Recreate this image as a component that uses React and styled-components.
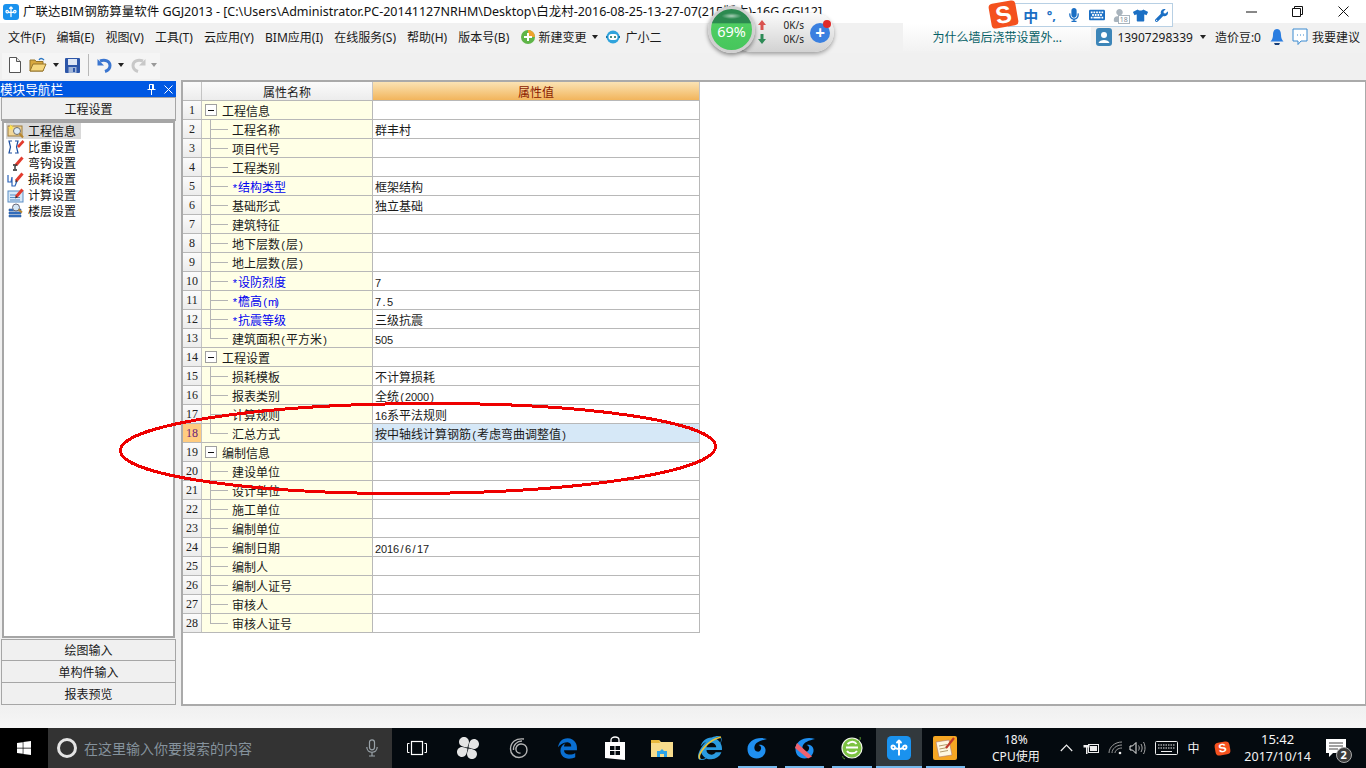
import React from "react";
import styled, { createGlobalStyle } from "styled-components";
import { FaMicrophone, FaKeyboard, FaTshirt, FaWrench, FaUser, FaWindows, FaEdgeLegacy, FaInternetExplorer } from "react-icons/fa";

const CJK = `"Noto Sans", "Noto Sans CJK SC", sans-serif`;

const Global = createGlobalStyle`
  html, body { margin: 0; padding: 0; height: 768px; overflow: hidden; background: #f0f0f0; }
  * { box-sizing: border-box; }
  #root { font-family: ${CJK}; font-size: 12px; color: #111; }
`;

const Page = styled.div`
  position: relative;
  width: 1366px;
  height: 768px;
  display: flex;
  flex-direction: column;
  overflow: hidden;
`;

/* ---------- title bar ---------- */
const TitleBar = styled.div`
  height: 23px;
  background: #fff;
  display: flex;
  align-items: center;
  padding-left: 3px;
  flex-shrink: 0;
`;
const TitleText = styled.div`
  margin-left: 4px;
  font-size: 12.5px;
  white-space: nowrap;
  flex: 1;
  overflow: hidden;
  color: #111;
  line-height: 23px;
`;
const WinControls = styled.div`
  display: flex;
  align-items: center;
  height: 23px;
`;
const WinBtn = styled.div`
  width: 46px;
  height: 20px;
  display: flex;
  align-items: center;
  justify-content: center;
`;

/* ---------- menu bar ---------- */
const MenuBar = styled.div`
  height: 30px;
  flex-shrink: 0;
  background: #f1f1f1;
  display: flex;
  align-items: center;
  padding: 0 0 2px 8px;
`;
const MenuItem = styled.div`
  margin-right: ${(p) => p.$mr ?? 11.1}px;
  white-space: nowrap;
  color: #1a1a1a;
  display: flex;
  align-items: center;
`;
const Label = styled.span`
  margin-left: ${(p) => p.$ml || 0}px;
`;
const MenuRight = styled.div`
  margin-left: auto;
  display: flex;
  align-items: center;
  height: 28px;
  padding-right: 6px;
`;
const AskBox = styled.div`
  width: 188px;
  height: 28px;
  background: linear-gradient(#fff, #f2f2f2);
  color: #056066;
  display: flex;
  align-items: center;
  padding-left: 29px;
  margin-right: 5px;
  white-space: nowrap;
`;
const UserChip = styled.div`
  display: flex;
  align-items: center;
  white-space: nowrap;
  color: #1a1a1a;
  margin-left: ${(p) => p.$ml || 0}px;
`;
const Caret = styled.span`
  display: inline-block;
  width: 0;
  height: 0;
  border-left: 3px solid transparent;
  border-right: 3px solid transparent;
  border-top: 4px solid ${(p) => p.$c || "#222"};
  margin: 0 ${(p) => p.$m ?? 5}px;
`;

/* ---------- toolbar ---------- */
const ToolBar = styled.div`
  height: 27px;
  flex-shrink: 0;
  background: #f0f0f0;
  display: flex;
  align-items: flex-start;
`;
const ToolGroup = styled.div`
  margin-left: 2px;
  width: 158px;
  height: 26px;
  background: #f5f5f5;
  display: flex;
  align-items: center;
  padding: 0 0 2px 3px;
`;
const ToolIcon = styled.div`
  width: ${(p) => p.$w || 20}px;
  height: 20px;
  display: flex;
  align-items: center;
  justify-content: center;
`;
const ToolSep = styled.div`
  width: 1px;
  height: 22px;
  background: #b8b8b8;
  margin: 0 6px 0 5px;
`;
const Mirror = styled.span`
  display: flex;
  transform: scaleX(-1);
`;

/* ---------- main ---------- */
const Main = styled.div`
  flex: 1;
  display: flex;
  min-height: 0;
`;
const LeftPane = styled.div`
  width: 176px;
  margin: 1px 5px 1px 0;
  display: flex;
  flex-direction: column;
  flex-shrink: 0;
`;
const PaneHead = styled.div`
  height: 16px;
  background: #0058e3;
  color: #fff;
  font-size: 12.6px;
  line-height: 15px;
  display: flex;
  align-items: center;
  justify-content: space-between;
  padding-right: 3px;
  white-space: nowrap;
`;
const HeadIcons = styled.div`
  display: flex;
  gap: 8px;
  align-items: center;
`;
const NavBtn = styled.div`
  height: ${(p) => p.$h || 22}px;
  background: #f0f0f0;
  border: 1px solid #a6a6a6;
  border-top-width: ${(p) => (p.$first ? 1 : 0)}px;
  border-bottom-width: ${(p) => (p.$big ? 2 : 1)}px;
  margin: 0 0 0 1px;
  display: flex;
  align-items: center;
  justify-content: center;
  color: #1a1a1a;
`;
const NavList = styled.div`
  flex: 1;
  margin: 0 1px 1px 2px;
  background: #fff;
  border: 2px solid #a6a6a6;
  padding: 0 0 0 2px;
`;
const NavItem = styled.div`
  height: 16px;
  width: 75px;
  display: flex;
  align-items: center;
  background: ${(p) => (p.$on ? "#d9d9d9" : "transparent")};
  padding-left: 1px;
  white-space: nowrap;
  svg { flex-shrink: 0; margin-right: 3px; }
`;
const Sheet = styled.div`
  flex: 1;
  border: 2px solid #aaa;
  border-right-width: 1px;
  background: #fff;
`;
const Grid = styled.div`
  width: 517px;
`;
const Row = styled.div`
  display: grid;
  grid-template-columns: 19px 171px 327px;
  grid-template-rows: 18px;
  height: 19px;
  line-height: 14px;
  border-bottom: 1px solid #b8b8b8;
`;
const NumCell = styled.div`
  background: ${(p) => (p.$on ? "#ffcc80" : "linear-gradient(#fbfbfb, #ececec)")};
  border-right: 1px solid #c4c4c4;
  color: ${(p) => (p.$on ? "#6a1b7a" : "#222")};
  font-family: "Liberation Serif", serif;
  font-size: 12px;
  display: flex;
  align-items: center;
  justify-content: center;
`;
const HeadCell = styled.div`
  border-right: 1px solid #c4c4c4;
  background: ${(p) => (p.$on ? "linear-gradient(#fbe3b4, #f2b55c)" : "linear-gradient(#fbfbfb, #ececec)")};
  color: ${(p) => (p.$on ? "#8a1a00" : "#1a1a1a")};
  display: flex;
  align-items: center;
  justify-content: center;
  padding-top: 3px;
`;
const NameCell = styled.div`
  position: relative;
  background: #ffffe6;
  border-right: 1px solid #b8b8b8;
  display: flex;
  align-items: center;
  padding: 4px 0 0 ${(p) => (p.$group ? 20 : 30)}px;
  color: ${(p) => (p.$req ? "#0000f0" : "#1a1a1a")};
  white-space: nowrap;
  ${(p) =>
    !p.$group &&
    `
    &::before {
      content: "";
      position: absolute;
      left: 8px;
      top: -1px;
      height: ${p.$last ? 11 : 20}px;
      border-left: 1px solid #b4b4b4;
    }
    &::after {
      content: "";
      position: absolute;
      left: 9px;
      top: 9px;
      width: 17px;
      border-top: 1px solid #b4b4b4;
    }
  `}
`;
const Expander = styled.span`
  position: absolute;
  left: 3px;
  top: 3px;
  width: 12px;
  height: 12px;
  border: 1px solid #a0a0a0;
  background: #fff;
  display: flex;
  align-items: center;
  justify-content: center;
  &::before {
    content: "";
    width: 6px;
    border-top: 1px solid #111;
  }
`;
const ValueCell = styled.div`
  background: ${(p) => (p.$on ? "#d6e8f7" : "#fff")};
  border-right: 1px solid #b8b8b8;
  padding: 4px 0 0 2px;
  display: flex;
  align-items: center;
  color: #1a1a1a;
  white-space: nowrap;
`;
const Half = styled.span`
  display: inline-block;
  width: 6px;
  text-align: center;
  font-family: "Liberation Sans", sans-serif;
  font-size: 11px;
  line-height: 1;
`;
const Footer = styled.div`
  height: 22px;
  flex-shrink: 0;
  background: linear-gradient(#f0f0f0, #f6f6f6);
`;

/* ---------- task bar ---------- */
const TaskBar = styled.div`
  height: 40px;
  flex-shrink: 0;
  background: #040a0f;
  display: flex;
  align-items: stretch;
  color: #fff;
`;
const StartBtn = styled.div`
  width: 48px;
  background: #000;
  display: flex;
  align-items: center;
  justify-content: center;
`;
const SearchBox = styled.div`
  width: 344px;
  background: #333;
  display: flex;
  align-items: center;
  padding-left: 9px;
  color: #85929c;
  font-size: 14px;
  white-space: nowrap;
`;
const Ring = styled.span`
  width: 20px;
  height: 20px;
  border: 3px solid #e4e4e4;
  border-radius: 50%;
  margin-right: 7px;
  flex-shrink: 0;
`;
const SearchMic = styled.span`
  margin-left: auto;
  margin-right: 14px;
  display: flex;
`;
const TaskCell = styled.div`
  position: relative;
  width: ${(p) => p.$w || 47.4}px;
  display: flex;
  align-items: center;
  justify-content: center;
  background: ${(p) => (p.$active ? "#32393d" : "transparent")};
  ${(p) =>
    p.$run &&
    `
    &::after {
      content: "";
      position: absolute;
      left: ${p.$active ? 0 : 4}px;
      right: ${p.$active ? 0 : 4}px;
      bottom: 0;
      height: 2px;
      background: #76b9ed;
    }
  `}
`;
const IeMark = styled.span`
  position: relative;
  display: flex;
  svg + svg {
    position: absolute;
    left: -1px;
    top: -1px;
  }
`;
const TrayCell = styled.div`
  width: ${(p) => p.$w}px;
  padding-left: ${(p) => p.$pl || 0}px;
  display: flex;
  flex-direction: column;
  align-items: center;
  justify-content: center;
  text-align: center;
  line-height: 17px;
  white-space: nowrap;
  color: #f4f4f4;
`;
const ClockLine = styled.span`
  font-size: ${(p) => p.$s}px;
`;
const SogouTile = styled.div`
  width: ${(p) => p.$s}px;
  height: ${(p) => p.$s - 2}px;
  background: #f4511e;
  border-radius: 4px;
  color: #fff;
  font-family: "Liberation Sans", sans-serif;
  font-weight: 700;
  font-size: ${(p) => p.$s - 3}px;
  line-height: ${(p) => p.$s - 2}px;
  text-align: center;
  transform: rotate(-10deg);
`;
const Badge = styled.span`
  position: absolute;
  left: 24px;
  top: 19px;
  width: 16px;
  height: 16px;
  border-radius: 50%;
  background: #3b3b3b;
  border: 1px solid #aaa;
  color: #fff;
  font-size: 11px;
  font-weight: 700;
  line-height: 14px;
  text-align: center;
`;

/* ---------- floating things ---------- */
const Meter = styled.div`
  position: absolute;
  left: 708px;
  top: 6px;
  width: 128px;
  height: 50px;
`;
const MeterPill = styled.div`
  position: absolute;
  left: 24px;
  top: 7px;
  width: 102px;
  height: 39px;
  border-radius: 20px;
  background: linear-gradient(#fafafa, #d2d2d2);
  box-shadow: 0 2px 4px rgba(0, 0, 0, 0.35);
  display: grid;
  grid-template-columns: 1fr 22px;
  align-items: center;
  padding: 0 3px 0 26px;
`;
const Speed = styled.div`
  display: grid;
  grid-template-columns: 12px 1fr;
  align-items: center;
  font-size: 10px;
  line-height: 14px;
  color: #222;
  text-align: right;
  margin: -2px 5px 0 0;
`;
const MeterBall = styled.div`
  position: absolute;
  left: 0;
  top: 0;
  width: 47px;
  height: 47px;
  border-radius: 50%;
  border: 3px solid #d0d0d0;
  box-shadow: 0 2px 4px rgba(0, 0, 0, 0.45);
  background: radial-gradient(ellipse 10px 3px at 50% 7px, rgba(255, 255, 255, 0.6), transparent),
    linear-gradient(#2c8a50 0, #2c8a50 34%, #4fce62 36%, #46c65c 100%);
  color: #fff;
  font-size: 14.5px;
  display: flex;
  align-items: center;
  justify-content: center;
  padding-top: 2px;
`;
const PlusBtn = styled.div`
  position: relative;
  width: 20px;
  height: 20px;
  margin-left: 1px;
  border-radius: 50%;
  background: #3a80e0;
  color: #fff;
  font-size: 17px;
  font-weight: 700;
  line-height: 19px;
  text-align: center;
  &::after {
    content: "";
    position: absolute;
    right: -1px;
    top: -3px;
    width: 8px;
    height: 8px;
    border-radius: 50%;
    background: #e02a2a;
  }
`;
const ImeBar = styled.div`
  position: absolute;
  left: 1008px;
  top: 3px;
  width: 165px;
  height: 24px;
  background: #fff;
  border: 1px solid #b8d0e4;
  display: flex;
  align-items: center;
  padding-left: 12px;
  color: #1b6fc4;
`;
const ImeItem = styled.span`
  width: ${(p) => p.$w}px;
  display: flex;
  align-items: center;
  justify-content: center;
  font-weight: ${(p) => (p.$bold ? 700 : 400)};
  font-size: ${(p) => p.$fs || 12}px;
  color: ${(p) => p.$c || "inherit"};
  position: relative;
`;
const AgeTag = styled.span`
  position: absolute;
  right: 1px;
  bottom: -2px;
  background: #fff;
  border: 1px solid #a9b4bd;
  font-size: 7px;
  line-height: 7px;
  padding: 0 1px;
  color: #7f8c96;
`;
const ImeTile = styled.div`
  position: absolute;
  left: 990px;
  top: 2px;
`;
const Ellipse = styled.svg`
  position: absolute;
  left: 110px;
  top: 395px;
  pointer-events: none;
`;

/* ---------- drawings ---------- */
const AppLogo = ({ s = 16 }) => (
  <svg width={s} height={s} viewBox="0 0 16 16">
    <rect width="16" height="16" rx="3" fill="#1a92ee" />
    <path d="M8 3v9.500M3 7.500c0-1.600 2-1.600 2.400 0 .3 1 1.400 1.200 2.600 1.200s2.300-.2 2.600-1.200C11 5.900 13 5.900 13 7.500s-2 1.700-2.400.6M3 7.500c0 1.600 2 1.700 2.400.6M8 3l-1.300 1.300M8 3l1.300 1.300" fill="none" stroke="#fff" strokeWidth="1.300" strokeLinecap="round" />
  </svg>
);

const Pencil = () => (
  <g>
    <path d="M9 10 15.500 2.500" stroke="#e23b2e" strokeWidth="3" />
    <path d="M8 11.500 9 8.800l1.600 1.400z" fill="#333" />
  </g>
);

const NavIcon = ({ kind }) => {
  if (kind === "info")
    return (
      <svg width="18" height="16" viewBox="0 0 18 16">
        <rect x="1" y="3" width="14" height="10" fill="#f1d79a" stroke="#9c7a3c" />
        <path d="M3 1l1 2 2-1-1 2 2 1-2 .5 .5 2-2-1.500-1.500 1.500 .3-2.200L1 4.500l2-.5z" fill="#ffe34d" />
        <circle cx="10" cy="8" r="3.500" fill="#dcebf8" stroke="#6d6d6d" />
        <path d="M12.500 10.500 16 14.500" stroke="#b8862e" strokeWidth="2" />
      </svg>
    );
  if (kind === "ratio")
    return (
      <svg width="18" height="16" viewBox="0 0 18 16">
        <path d="M5 2H2l1.500 6L2 14h3M8 2h3L9.500 8l1.500 6H8" fill="none" stroke="#1d4fa0" strokeWidth="1.200" />
        <path d="M11 8 16.500 2" stroke="#e23b2e" strokeWidth="2.600" />
      </svg>
    );
  if (kind === "hook")
    return (
      <svg width="18" height="16" viewBox="0 0 18 16">
        <path d="M8 11v3M6 15h4M6 10h3" stroke="#222" strokeWidth="1.300" fill="none" />
        <Pencil />
      </svg>
    );
  if (kind === "loss")
    return (
      <svg width="18" height="16" viewBox="0 0 18 16">
        <path d="M1 4v7h3l1-5v9h3l2-5" fill="none" stroke="#2a62b8" strokeWidth="1.200" />
        <Pencil />
      </svg>
    );
  if (kind === "calc")
    return (
      <svg width="18" height="16" viewBox="0 0 18 16">
        <rect x="1" y="4" width="15" height="11" fill="#d6e8f8" stroke="#5b8dc4" />
        <path d="M3 8h7M3 10.500h10M3 13h10" stroke="#5b8dc4" />
        <Pencil />
      </svg>
    );
  return (
    <svg width="18" height="16" viewBox="0 0 18 16">
      <path d="M2 6h12v2H2zM2 9h12v2H2zM2 12h12v2H2z" fill="#3b78c8" stroke="#1f4f96" strokeWidth=".5" />
      <circle cx="9" cy="4.500" r="3.500" fill="#d4e6f5" stroke="#667" />
      <path d="M11.500 6.500 15 9.500" stroke="#b8862e" strokeWidth="2" />
    </svg>
  );
};

const NewDoc = () => (
  <svg width="14" height="16" viewBox="0 0 14 16">
    <path d="M1.500 .5h7l4 4v11h-11z" fill="#fff" stroke="#555" />
    <path d="M8.500 .5v4h4" fill="#e8e8e8" stroke="#555" />
  </svg>
);
const OpenFolder = () => (
  <svg width="18" height="16" viewBox="0 0 18 16">
    <path d="M1 3h5l1 1.500h7V14H1z" fill="#d9a83e" stroke="#96742a" />
    <path d="M1 14l3-7h13l-3 7z" fill="#f6d77e" stroke="#96742a" />
    <path d="M10 3c1-2 3-2 5 0" fill="none" stroke="#2d78c4" strokeWidth="1.300" />
  </svg>
);
const Floppy = () => (
  <svg width="15" height="15" viewBox="0 0 15 15">
    <rect width="15" height="15" rx="1" fill="#2d56a8" />
    <rect x="3" y="1" width="9" height="6" fill="#dfe7f4" />
    <rect x="3.500" y="9" width="8" height="6" fill="#9fb4d8" />
    <rect x="8" y="10" width="2" height="4" fill="#2d56a8" />
  </svg>
);
const Undo = ({ c }) => (
  <svg width="16" height="15" viewBox="0 0 16 15">
    <path d="M3 3c5-2 10 0 10 4.500 0 3-2 5-5 6" fill="none" stroke={c} strokeWidth="3" />
    <path d="M.500 1v6.500h6.500z" fill={c} />
  </svg>
);
const ChangeIcon = () => (
  <svg width="16" height="16" viewBox="0 0 16 16">
    <circle cx="8" cy="8" r="7" fill="#5fb548" />
    <path d="M8 1a7 7 0 0 1 7 7H8z" fill="#f0a32e" />
    <path d="M4 8h8M8 4v8" stroke="#fff" strokeWidth="2" />
  </svg>
);
const RobotIcon = () => (
  <svg width="16" height="16" viewBox="0 0 16 16">
    <circle cx="8" cy="8" r="6.500" fill="#2fa3dc" />
    <rect x="3.500" y="5" width="9" height="6" rx="3" fill="#fff" />
    <circle cx="6" cy="8" r="1" fill="#165" />
    <circle cx="10" cy="8" r="1" fill="#165" />
    <path d="M1 8h1.500M13.500 8H15" stroke="#1673a8" strokeWidth="2" />
  </svg>
);
const UserBadge = () => (
  <svg width="16" height="18" viewBox="0 0 16 18">
    <rect width="16" height="18" rx="3" fill="#3c85b8" />
    <circle cx="8" cy="7" r="3" fill="#fff" />
    <path d="M2.500 15c1-4 10-4 11 0z" fill="#fff" />
  </svg>
);
const Bell = () => (
  <svg width="14" height="18" viewBox="0 0 14 18">
    <path d="M7 1c3 0 4 3 4 6s1 5 2.500 6.500H.5C2 12 3 10 3 7s1-6 4-6z" fill="#2a7de0" />
    <path d="M4 15h6l-1 2H5z" fill="#173e78" />
  </svg>
);
const Bubble = () => (
  <svg width="16" height="18" viewBox="0 0 16 18">
    <path d="M1 1h14v12H9l-3 3.500V13H1z" fill="#fff" stroke="#3a8ad0" />
    <path d="M5 7h1M8 7h1M11 7h1" stroke="#3a8ad0" />
  </svg>
);
const SpeedArrow = ({ c, down }) => (
  <svg width="8" height="10" viewBox="0 0 8 10">
    <path d={down ? "M2.500 0h3v5H8L4 10 0 5h2.500z" : "M2.500 10h3V5H8L4 0 0 5h2.500z"} fill={c} />
  </svg>
);

const SwirlG = ({ c = "#1f8ff0", band }) => (
  <svg width="24" height="24" viewBox="0 0 24 24">
    <path d="M22 3C12 0 2.500 5 2.500 13c0 6 4 9.500 9 9.500 6 0 9.500-4.500 9-9-.4-3.500-4-5.500-7-4.500 2 .5 3 2 2.500 4-.5 2-2 3-4 2.500-2-.5-3-2.500-2.500-5C10.500 6 16 4.500 22 3z" fill={c} />
    {band && <path d="M2 12 15 22.500l4-2L4 7z" fill="#f0626e" />}
  </svg>
);
const Fan = () => (
  <svg width="24" height="24" viewBox="0 0 24 24" fill="#e4e4e4">
    <path d="M11.500 11.500C7 11 3 10 3 6c0-3 2.500-5 5-5s5 2 5 5c0 2-1 3-1.500 5.500z" />
    <path d="M12.500 11.500C13 7 14 3 18 3c3 0 5 2.500 5 5s-2 5-5 5c-2 0-3-1-5.500-1.500z" />
    <path d="M12.500 12.500C17 13 21 14 21 18c0 3-2.500 5-5 5s-5-2-5-5c0-2 1-3 1.500-5.500z" />
    <path d="M11.500 12.500C11 17 10 21 6 21c-3 0-5-2.500-5-5s2-5 5-5c2 0 3 1 5.500 1.500z" />
  </svg>
);
const Swirl = () => (
  <svg width="20" height="22" viewBox="0 0 20 22" fill="none" stroke="#b5b5b5" strokeWidth="1.400">
    <path d="M15 2C7 1 1.500 5 1.500 12c0 5 4 8.500 8.500 8.500s8-3.500 8-7.500-3-6.500-6.500-6c-3 .4-5 3-4.500 6 .4 2.200 2.500 3.500 4.500 3" />
    <path d="M13 4C8 4 4 8 4.500 13" />
  </svg>
);
const StoreBag = () => (
  <svg width="22" height="24" viewBox="0 0 22 24">
    <path d="M7 6V4c0-4 8-4 8 0v2" fill="none" stroke="#fff" strokeWidth="1.300" />
    <path d="M1 6h20v18L1 22z" fill="#fff" />
    <path d="M6 10h4.500v4H6zM11.500 10H16v4h-4.500zM6 15h4.500v4H6zM11.500 15H16v4h-4.500z" fill="#040a0f" />
  </svg>
);
const Explorer = () => (
  <svg width="22" height="20" viewBox="0 0 22 20">
    <path d="M0 2h8l2 2h12v15H0z" fill="#f7dc8c" />
    <path d="M0 2h8l1 3H0z" fill="#e8b93e" />
    <path d="M6 19v-6h3l2-2 2 2h3v6h-3v-3H9v3z" fill="#2ea4e8" />
  </svg>
);
const IeRing = () => (
  <svg width="26" height="26" viewBox="0 0 26 26" fill="none" stroke="#e8c23a" strokeWidth="1.600">
    <path d="M3 24C0 20 10 5 24 2" />
  </svg>
);
const GreenE = () => (
  <svg width="24" height="24" viewBox="0 0 24 24">
    <circle cx="12" cy="12" r="10" fill="#7cc242" stroke="#f1f6e8" strokeWidth="1.200" />
    <path d="M6 11.500h12M7 15c2 3 8 3 10 0M7.500 8c3-3 7-3 9 0" fill="none" stroke="#fff" strokeWidth="1.800" />
    <path d="M20 1c1 3-1 4-3 5M3 20c-1 1 0 2 2 3" stroke="#5ea52f" fill="none" />
  </svg>
);
const NotesApp = () => (
  <svg width="24" height="24" viewBox="0 0 24 24">
    <rect width="24" height="24" rx="2" fill="#f5a623" />
    <path d="M3 6l13-2 3 15-13 2z" fill="#fff7e0" stroke="#a77" strokeWidth=".6" />
    <path d="M6 10l8-1.500M6.500 13l8-1.500M7 16l8-1.500" stroke="#b39a6a" />
    <path d="M13 12 21 2" stroke="#c0392b" strokeWidth="2.200" />
  </svg>
);
const MicOutline = () => (
  <svg width="12" height="18" viewBox="0 0 12 18" fill="none" stroke="#9aa3a9" strokeWidth="1.200">
    <rect x="3.500" y=".8" width="5" height="10" rx="2.500" />
    <path d="M.8 8c0 7 10.400 7 10.400 0M6 13.500V17M3 17h6" />
  </svg>
);
const TaskView = () => (
  <svg width="20" height="16" viewBox="0 0 20 16" fill="none" stroke="#fff">
    <rect x="4.500" y="1.500" width="11" height="13" strokeWidth="1.200" />
    <path d="M2.500 3.500H.5v9h2M17.500 3.500h2v9h-2" strokeWidth="1" />
  </svg>
);
const TrayChevron = () => (
  <svg width="13" height="8" viewBox="0 0 13 8" fill="none" stroke="#eee" strokeWidth="1.200">
    <path d="M.8 7 6.500 1.200 12.200 7" />
  </svg>
);
const TrayBattery = () => (
  <svg width="16" height="14" viewBox="0 0 16 14" fill="#eee">
    <path d="M2 1v3M5 1v3M.5 4h6v2.500H4.500V13H3V6.500H.5z" />
    <rect x="5.500" y="3.500" width="10" height="8" fill="none" stroke="#eee" />
    <rect x="7" y="5" width="7" height="5" />
  </svg>
);
const TrayWifi = () => (
  <svg width="15" height="14" viewBox="0 0 15 14" fill="none" stroke="#9a9a9a">
    <path d="M1 12C1 6 7 1 14 1M4 12c0-4 4-8 10-8M7 12c0-2.500 3-5 7-5" />
    <circle cx="12" cy="12" r="1.300" fill="#eee" stroke="none" />
  </svg>
);
const TraySound = () => (
  <svg width="17" height="14" viewBox="0 0 17 14" fill="none" stroke="#eee">
    <path d="M1 5h2.500L7 1.500v11L3.500 9H1z" />
    <path d="M9.500 4.500c1 1.500 1 3.500 0 5M12 3c1.500 2.500 1.500 5.500 0 8M14.500 1c2 3.500 2 8.500 0 12" stroke="#aaa" />
  </svg>
);
const TrayKeys = () => (
  <svg width="23" height="14" viewBox="0 0 23 14" fill="none" stroke="#eee">
    <rect x=".5" y=".5" width="22" height="13" rx="1" />
    <path d="M3 4h17M3 7h17" strokeDasharray="1.500 1" />
    <path d="M6 10.500h11" />
  </svg>
);
const NoteIcon = () => (
  <svg width="22" height="20" viewBox="0 0 22 20">
    <path d="M1 1h20v14H8l-4 4v-4H1z" fill="#fff" />
    <path d="M4 5h14M4 8h14M4 11h9" stroke="#444" />
  </svg>
);

/* mixes half width glyphs (fixed 6px, like the grid's bitmap font) with CJK text */
const mixed = (text) =>
  text.split(/([\x20-\x7e])/).map((part, i) =>
    /^[\x20-\x7e]$/.test(part) ? <Half key={i}>{part}</Half> : part
  );

const rows = [
  { name: "工程信息", group: true },
  { name: "工程名称", value: "群丰村" },
  { name: "项目代号" },
  { name: "工程类别" },
  { name: "*结构类型", value: "框架结构", req: true },
  { name: "基础形式", value: "独立基础" },
  { name: "建筑特征" },
  { name: "地下层数(层)" },
  { name: "地上层数(层)" },
  { name: "*设防烈度", value: "7", req: true },
  { name: "*檐高(m)", value: "7.5", req: true },
  { name: "*抗震等级", value: "三级抗震", req: true },
  { name: "建筑面积(平方米)", value: "505", last: true },
  { name: "工程设置", group: true },
  { name: "损耗模板", value: "不计算损耗" },
  { name: "报表类别", value: "全统(2000)" },
  { name: "计算规则", value: "16系平法规则" },
  { name: "汇总方式", value: "按中轴线计算钢筋(考虑弯曲调整值)", on: true, last: true },
  { name: "编制信息", group: true },
  { name: "建设单位" },
  { name: "设计单位" },
  { name: "施工单位" },
  { name: "编制单位" },
  { name: "编制日期", value: "2016/6/17" },
  { name: "编制人" },
  { name: "编制人证号" },
  { name: "审核人" },
  { name: "审核人证号", last: true },
];

const menus = ["文件(F)", "编辑(E)", "视图(V)", "工具(T)", "云应用(Y)", "BIM应用(I)", "在线服务(S)", "帮助(H)", "版本号(B)"];

const navItems = [
  ["info", "工程信息"],
  ["ratio", "比重设置"],
  ["hook", "弯钩设置"],
  ["loss", "损耗设置"],
  ["calc", "计算设置"],
  ["floor", "楼层设置"],
];

export default function App() {
  return (
    <Page>
      <Global />
      <TitleBar>
        <AppLogo />
        <TitleText>广联达BIM钢筋算量软件 GGJ2013 - [C:\Users\Administrator.PC-20141127NRHM\Desktop\白龙村-2016-08-25-13-27-07(215版本)-16G.GGJ12]</TitleText>
        <WinControls>
          <WinBtn>
            <svg width="11" height="2" viewBox="0 0 11 2"><path d="M0 1h11" stroke="#111" /></svg>
          </WinBtn>
          <WinBtn>
            <svg width="11" height="11" viewBox="0 0 11 11" fill="none" stroke="#111"><path d="M.5 2.500h8v8h-8zM2.500 2.500v-2h8v8h-2" /></svg>
          </WinBtn>
          <WinBtn>
            <svg width="11" height="11" viewBox="0 0 11 11" stroke="#111"><path d="M.5.5l10 10M10.500.5l-10 10" /></svg>
          </WinBtn>
        </WinControls>
      </TitleBar>

      <MenuBar>
        {menus.map((m) => (
          <MenuItem key={m}>{m}</MenuItem>
        ))}
        <MenuItem $mr={1}>
          <ChangeIcon />
          <Label $ml={2}>新建变更</Label>
          <Caret $m={6} />
        </MenuItem>
        <MenuItem>
          <RobotIcon />
          <Label $ml={4}>广小二</Label>
        </MenuItem>
        <MenuRight>
          <AskBox>为什么墙后浇带设置外...</AskBox>
          <UserChip>
            <UserBadge />
            <Label $ml={5}>13907298339</Label>
            <Caret $m={7} />
          </UserChip>
          <UserChip $ml={2}>造价豆:0</UserChip>
          <UserChip $ml={9}><Bell /></UserChip>
          <UserChip $ml={8}><Bubble /></UserChip>
          <UserChip $ml={4}>我要建议</UserChip>
        </MenuRight>
      </MenuBar>

      <ToolBar>
        <ToolGroup>
          <ToolIcon><NewDoc /></ToolIcon>
          <ToolIcon $w={26}><OpenFolder /></ToolIcon>
          <Caret $m={2} />
          <ToolIcon $w={22}><Floppy /></ToolIcon>
          <ToolSep />
          <ToolIcon><Undo c="#3b76d0" /></ToolIcon>
          <Caret $m={3} />
          <ToolIcon $w={22}>
            <Mirror><Undo c="#c8c8c8" /></Mirror>
          </ToolIcon>
          <Caret $m={2} $c="#999" />
        </ToolGroup>
      </ToolBar>

      <Main>
        <LeftPane>
          <PaneHead>
            模块导航栏
            <HeadIcons>
              <svg width="9" height="11" viewBox="0 0 9 11" fill="none" stroke="#fff"><path d="M2.500.5h4v5h-4zM.5 5.500h8M4.500 6v5M5.500 1v4" /></svg>
              <svg width="9" height="9" viewBox="0 0 9 9" stroke="#fff"><path d="M.5.500l8 8M8.500.500l-8 8" /></svg>
            </HeadIcons>
          </PaneHead>
          <NavBtn $first $big $h={24}>工程设置</NavBtn>
          <NavList>
            {navItems.map(([kind, label], i) => (
              <NavItem key={kind} $on={i === 0}>
                <NavIcon kind={kind} />
                {label}
              </NavItem>
            ))}
          </NavList>
          <NavBtn $first>绘图输入</NavBtn>
          <NavBtn>单构件输入</NavBtn>
          <NavBtn>报表预览</NavBtn>
        </LeftPane>

        <Sheet>
          <Grid>
            <Row>
              <HeadCell />
              <HeadCell>属性名称</HeadCell>
              <HeadCell $on>属性值</HeadCell>
            </Row>
            {rows.map((r, i) => (
              <Row key={i}>
                <NumCell $on={r.on}>{i + 1}</NumCell>
                <NameCell $group={r.group} $req={r.req} $last={r.last}>
                  {r.group && <Expander />}
                  {mixed(r.name)}
                </NameCell>
                <ValueCell $on={r.on}>{r.value ? mixed(r.value) : null}</ValueCell>
              </Row>
            ))}
          </Grid>
        </Sheet>
      </Main>

      <Footer />

      <TaskBar>
        <StartBtn><FaWindows size={16} color="#fff" /></StartBtn>
        <SearchBox>
          <Ring />
          在这里输入你要搜索的内容
          <SearchMic><MicOutline /></SearchMic>
        </SearchBox>
        <TaskCell $w={50.7}><TaskView /></TaskCell>
        <TaskCell $w={50.7}><Fan /></TaskCell>
        <TaskCell $w={50.6}><Swirl /></TaskCell>
        <TaskCell><FaEdgeLegacy size={21} color="#0a6fd1" /></TaskCell>
        <TaskCell><StoreBag /></TaskCell>
        <TaskCell><Explorer /></TaskCell>
        <TaskCell>
          <IeMark>
            <FaInternetExplorer size={24} color="#2a9be0" />
            <IeRing />
          </IeMark>
        </TaskCell>
        <TaskCell $run><SwirlG /></TaskCell>
        <TaskCell $run><SwirlG band /></TaskCell>
        <TaskCell $run><GreenE /></TaskCell>
        <TaskCell $run $active $w={46}><AppLogo s={24} /></TaskCell>
        <TaskCell $run><NotesApp /></TaskCell>

        <TrayCell $w={85.5} $pl={8}>
          <span>18%</span>
          <span>CPU使用</span>
        </TrayCell>
        <TrayCell $w={24}><TrayChevron /></TrayCell>
        <TrayCell $w={24}><TrayBattery /></TrayCell>
        <TrayCell $w={25}><TrayWifi /></TrayCell>
        <TrayCell $w={20}><TraySound /></TrayCell>
        <TrayCell $w={38}><TrayKeys /></TrayCell>
        <TrayCell $w={16}>中</TrayCell>
        <TrayCell $w={42}><SogouTile $s={15}>S</SogouTile></TrayCell>
        <TrayCell $w={68}>
          <ClockLine $s={13}>15:42</ClockLine>
          <ClockLine $s={12.5}>2017/10/14</ClockLine>
        </TrayCell>
        <TaskCell $w={48}>
          <NoteIcon />
          <Badge>2</Badge>
        </TaskCell>
      </TaskBar>

      <Meter>
        <MeterPill>
          <Speed>
            <SpeedArrow c="#d9534f" />
            <span>0K/s</span>
            <SpeedArrow c="#2e8b57" down />
            <span>0K/s</span>
          </Speed>
          <PlusBtn>+</PlusBtn>
        </MeterPill>
        <MeterBall>69%</MeterBall>
      </Meter>

      <ImeBar>
        <ImeItem $w={20} $bold $fs={15}>中</ImeItem>
        <ImeItem $w={22} $bold $fs={13}>°,</ImeItem>
        <ImeItem $w={24}><FaMicrophone size={14} /></ImeItem>
        <ImeItem $w={22}><FaKeyboard size={16} /></ImeItem>
        <ImeItem $w={24} $c="#a9b4bd"><FaUser size={13} /><AgeTag>18</AgeTag></ImeItem>
        <ImeItem $w={20}><FaTshirt size={15} /></ImeItem>
        <ImeItem $w={22}><FaWrench size={13} /></ImeItem>
      </ImeBar>
      <ImeTile><SogouTile $s={27}>S</SogouTile></ImeTile>

      <Ellipse width="620" height="110" viewBox="0 0 620 110">
        <ellipse cx="308" cy="53.500" rx="297.500" ry="45" transform="rotate(-0.4 308 53.500)" fill="none" stroke="#ee0000" strokeWidth="3" shapeRendering="crispEdges" />
      </Ellipse>
    </Page>
  );
}
